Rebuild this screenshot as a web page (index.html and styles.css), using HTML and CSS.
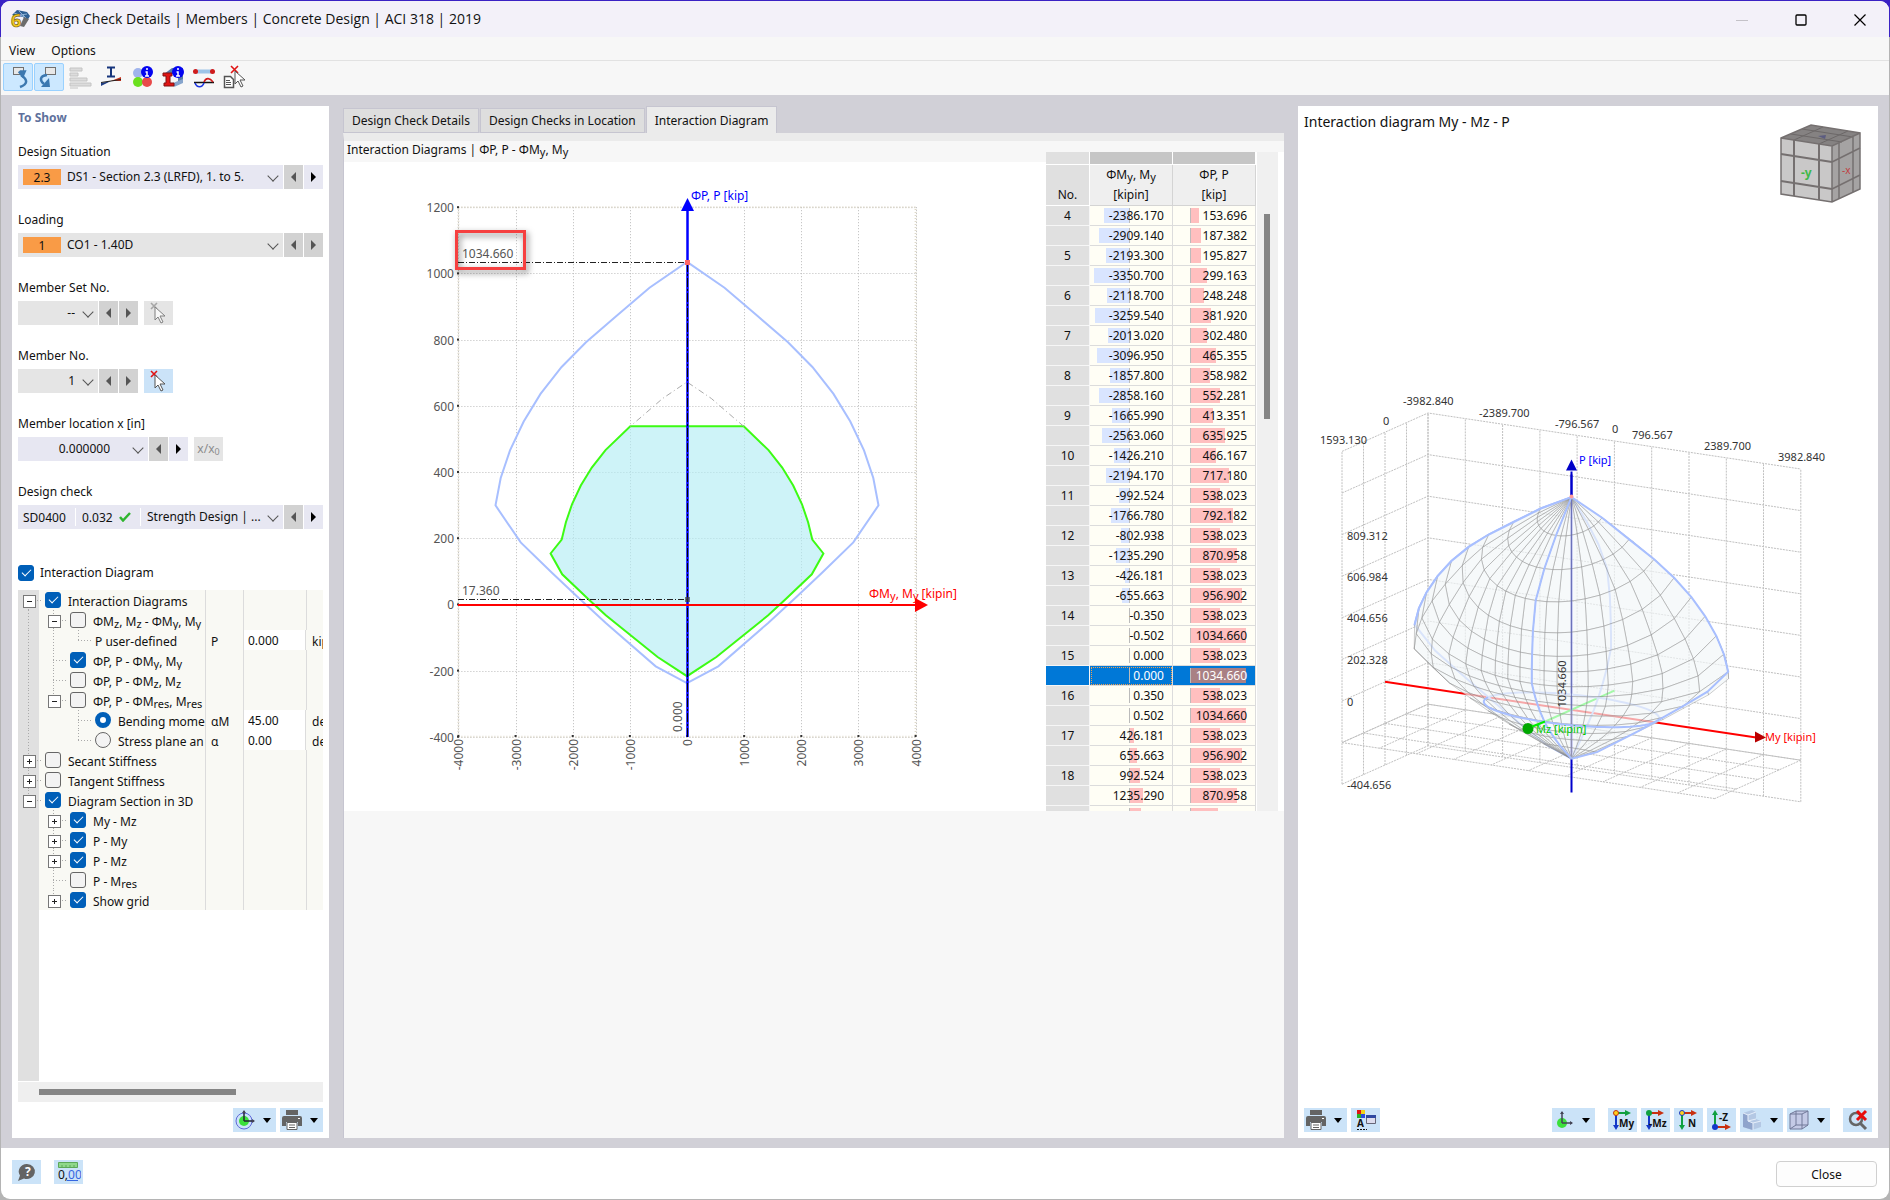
FILE: index.html
```html
<!DOCTYPE html>
<html lang="en">
<head>
    <meta charset="UTF-8">
    <meta name="viewport" content="width=device-width, initial-scale=1.0">
    <title>Design Check Details | Members | Concrete Design | ACI 318 | 2019</title>
    <link rel="stylesheet" href="styles.css">
</head>
<body>

<!-- shared icons -->
<svg class="defs" width="0" height="0" aria-hidden="true">
    <symbol id="i-pick" viewBox="0 0 20 24">
        <path d="M2 2l6 6M8 2l-6 6" stroke="currentColor" stroke-width="1.6"/>
        <path d="M6 6v13l3-3 3 6 2-1-3-6h5z" fill="#fff" stroke="#555" stroke-width="1"/>
    </symbol>
    <symbol id="i-print" viewBox="0 0 22 22">
        <path d="M5 1h12v5H5zM3 7h16q2 0 2 2v8h-4v-4H5v4H1V9q0-2 2-2z" fill="#646464"/>
        <path d="M6 13.500h10v7H6z" fill="#fff" stroke="#646464"/>
        <path d="M8 16h6M8 18.500h6" stroke="#646464"/>
        <path d="M17 9.500h2" stroke="#fff"/>
    </symbol>
    <symbol id="i-down" viewBox="0 0 8 5"><path d="M0 0h8L4 5z" fill="#000"/></symbol>
</svg>

<div class="window">
    <header class="titlebar">
        <svg class="app-icon" viewBox="0 0 20 20">
            <path d="M2 6l5-5 10 2 3 4-3 5-4-4z" fill="#2f5f94"/>
            <path d="M4 4l11 4M9 2l7 7M3 7l14-2" stroke="#8db1d6"/>
            <path d="M14 8l5 2-5 8-4-1z" fill="#6c6c6c"/>
            <text x="1" y="18" class="six">6</text>
        </svg>
        <h1>Design Check Details | Members | Concrete Design | ACI 318 | 2019</h1>
        <div class="win-buttons">
            <button aria-label="Minimize" disabled><svg viewBox="0 0 12 12"><path d="M0 6.500h12" stroke="#c4c2c8"/></svg></button>
            <button aria-label="Maximize"><svg viewBox="0 0 12 12"><rect x="1" y="1" width="10" height="10" rx="1" fill="none" stroke="#000" stroke-width="1.300"/></svg></button>
            <button aria-label="Close window"><svg viewBox="0 0 12 12"><path d="M.5.5l11 11M11.500.5l-11 11" stroke="#000" stroke-width="1.200"/></svg></button>
        </div>
    </header>

    <nav class="menubar">
        <button>View</button>
        <button>Options</button>
    </nav>

    <div class="toolbar">
        <button class="tool active" aria-label="Previous"><svg viewBox="0 0 24 24"><rect x="7.500" y="2.500" width="10" height="7" fill="#e8e8e8" stroke="#707070"/><path d="M14 22c8-3 8-7 1-12" fill="none" stroke="#3c78b0" stroke-width="2.500"/><path d="M14 5v8l8-4-5-4z" transform="rotate(-40 16 9)" fill="#3c78b0"/></svg></button>
        <button class="tool active" aria-label="Next"><svg viewBox="0 0 24 24"><rect x="8.500" y="2.500" width="10" height="7" fill="#e8e8e8" stroke="#707070"/><path d="M10 10c-8 1-7 6-3 9" fill="none" stroke="#3c78b0" stroke-width="2.500"/><path d="M4 22h9l-1-9z" fill="#3c78b0"/></svg></button>
        <button class="tool" aria-label="Result list" disabled><svg viewBox="0 0 24 24"><path d="M2 3h12v3H2zM2 8h8v3H2zM2 13h17v3H2zM2 18h21v3H2zM2 23h8" fill="#dcdcdc" stroke="#c4c4c4"/></svg></button>
        <button class="tool" aria-label="Stresses"><svg viewBox="0 0 24 24"><path d="M8 2.500h8M12 2.500v9M8 11.500h8" stroke="#16357c" stroke-width="2" fill="none"/><path d="M2 21v-3l10-2z" fill="#1f3d84"/><path d="M12 16l10-4v4z" fill="#c7301a"/><path d="M2 17.500l20-3" stroke="#222"/></svg></button>
        <button class="tool" aria-label="Material info"><svg viewBox="0 0 24 24"><circle cx="8" cy="8" r="5" fill="#a0b4ec"/><circle cx="8" cy="17" r="5" fill="#6be01e"/><circle cx="17" cy="17" r="5" fill="#e84a4a"/><circle cx="17" cy="7" r="6" fill="#0404f0"/><path d="M17 3v2M15.500 7H17v4M15 11h4" stroke="#fff" stroke-width="1.500" fill="none"/></svg></button>
        <button class="tool" aria-label="Section info"><svg viewBox="0 0 24 24"><path d="M3 9l8-6h11v13l-5 4V9z" fill="#5879a8"/><path d="M12 18l10-4v4l-9 4z" fill="#86a4cc"/><path d="M2 8h9v3H9v7h4v3H3v-3h2v-7H2z" fill="#e01414" stroke="#801010"/><circle cx="17" cy="7" r="6" fill="#0404f0"/><path d="M17 3v2M15.500 7H17v4M15 11h4" stroke="#fff" stroke-width="1.500" fill="none"/></svg></button>
        <button class="tool" aria-label="Result diagram"><svg viewBox="0 0 24 24"><path d="M3 6.500h18" stroke="#9dc4e8" stroke-width="4"/><circle cx="3.500" cy="6.500" r="2.500" fill="#d01c1c"/><circle cx="20.500" cy="6.500" r="2.500" fill="#d01c1c"/><path d="M2 17.500h20" stroke="#111" stroke-width="1.500"/><path d="M3 18c2 5 7 5 9 0" fill="none" stroke="#1b34e0" stroke-width="1.600"/><path d="M12 17c2-5 6-4 9 0" fill="none" stroke="#d01c1c" stroke-width="1.600"/></svg></button>
        <button class="tool" aria-label="Select"><svg viewBox="0 0 24 24"><path d="M1.500 11.500h6l3 3v8h-9z" fill="#fff" stroke="#555" stroke-width="1.500"/><path d="M3 15.500h4M3 17.500h5M3 19.500h5" stroke="#555"/><path d="M8 1l7 7M15 1l-7 7" stroke="#e01414" stroke-width="1.600"/><path d="M12 6v13l3-3 3 6 2-1-3-6h5z" fill="#fff" stroke="#555"/></svg></button>
    </div>

    <main>
        <section class="panel side">
            <h2>To Show</h2>

            <div class="field">
                <label for="situation">Design Situation</label>
                <div class="line">
                    <div class="combo wide"><span class="chip">2.3</span><select id="situation"><option>DS1 - Section 2.3 (LRFD), 1. to 5.</option></select></div>
                    <button class="step off prev" aria-label="Previous design situation"></button>
                    <button class="step next" aria-label="Next design situation"></button>
                </div>
            </div>

            <div class="field">
                <label for="loading">Loading</label>
                <div class="line">
                    <div class="combo wide gray"><span class="chip">1</span><select id="loading"><option>CO1 - 1.40D</option></select></div>
                    <button class="step off prev" aria-label="Previous loading"></button>
                    <button class="step off next" aria-label="Next loading"></button>
                </div>
            </div>

            <div class="field">
                <label for="memberset">Member Set No.</label>
                <div class="line">
                    <div class="combo small gray"><select id="memberset"><option>--</option></select></div>
                    <button class="step off prev" aria-label="Previous member set"></button>
                    <button class="step off next" aria-label="Next member set"></button>
                    <button class="icon-btn pick disabled" aria-label="Pick member set"><svg width="20" height="24"><use href="#i-pick"/></svg></button>
                </div>
            </div>

            <div class="field">
                <label for="member">Member No.</label>
                <div class="line">
                    <div class="combo small gray"><select id="member"><option>1</option></select></div>
                    <button class="step off prev" aria-label="Previous member"></button>
                    <button class="step off next" aria-label="Next member"></button>
                    <button class="icon-btn pick" aria-label="Pick member"><svg width="20" height="24"><use href="#i-pick"/></svg></button>
                </div>
            </div>

            <div class="field">
                <label for="location">Member location x [in]</label>
                <div class="line">
                    <div class="combo medium"><select id="location"><option>0.000000</option></select></div>
                    <button class="step off prev" aria-label="Previous location"></button>
                    <button class="step next" aria-label="Next location"></button>
                    <button class="icon-btn pick disabled ratio">x/x<sub>0</sub></button>
                </div>
            </div>

            <div class="field">
                <label for="check">Design check</label>
                <div class="line">
                    <div class="combo wide">
                        <span class="code">SD0400</span>
                        <span class="util">0.032 <svg width="12" height="10" viewBox="0 0 12 10"><path d="M1 5l3 3.500L11 1" fill="none" stroke="#2fb52f" stroke-width="2.500"/></svg></span>
                        <select id="check"><option>Strength Design | ...</option></select>
                    </div>
                    <button class="step off prev" aria-label="Previous check"></button>
                    <button class="step next" aria-label="Next check"></button>
                </div>
            </div>

            <label class="main-check"><input type="checkbox" checked> Interaction Diagram</label>

            <div class="tree">
                <div class="row"><div class="name"><button class="g box first-v" aria-label="Collapse"></button><label><input type="checkbox" checked>Interaction Diagrams</label></div><span></span><span></span><span></span></div>
                <div class="row"><div class="name"><i class="g v"></i><button class="g box" aria-label="Collapse"></button><label><input type="checkbox"><span>ΦM<sub>z</sub>, M<sub>z</sub> - ΦM<sub>y</sub>, M<sub>y</sub></span></label></div><span></span><span></span><span></span></div>
                <div class="row"><div class="name"><i class="g v"></i><i class="g v"></i><i class="g l"></i><label for="p-user">P user-defined</label></div><span>P</span><input class="value" id="p-user" value="0.000"><span>kip</span></div>
                <div class="row"><div class="name"><i class="g v"></i><i class="g t"></i><label><input type="checkbox" checked><span>ΦP, P - ΦM<sub>y</sub>, M<sub>y</sub></span></label></div><span></span><span></span><span></span></div>
                <div class="row"><div class="name"><i class="g v"></i><i class="g t"></i><label><input type="checkbox"><span>ΦP, P - ΦM<sub>z</sub>, M<sub>z</sub></span></label></div><span></span><span></span><span></span></div>
                <div class="row"><div class="name"><i class="g v"></i><button class="g box last" aria-label="Collapse"></button><label><input type="checkbox"><span>ΦP, P - ΦM<sub>res</sub>, M<sub>res</sub></span></label></div><span></span><span></span><span></span></div>
                <div class="row"><div class="name"><i class="g v"></i><i class="g"></i><i class="g t"></i><label><input type="radio" name="res" checked>Bending moment</label></div><span>αM</span><input class="value" aria-label="Bending moment angle" value="45.00"><span>deg</span></div>
                <div class="row"><div class="name"><i class="g v"></i><i class="g"></i><i class="g l"></i><label><input type="radio" name="res">Stress plane an</label></div><span>α</span><input class="value" aria-label="Stress plane angle" value="0.00"><span>deg</span></div>
                <div class="row"><div class="name"><button class="g box" aria-label="Expand"></button><label><input type="checkbox">Secant Stiffness</label></div><span></span><span></span><span></span></div>
                <div class="row"><div class="name"><button class="g box" aria-label="Expand"></button><label><input type="checkbox">Tangent Stiffness</label></div><span></span><span></span><span></span></div>
                <div class="row"><div class="name"><button class="g box last" aria-label="Collapse"></button><label><input type="checkbox" checked>Diagram Section in 3D</label></div><span></span><span></span><span></span></div>
                <div class="row"><div class="name"><i class="g"></i><button class="g box" aria-label="Expand"></button><label><input type="checkbox" checked>My - Mz</label></div><span></span><span></span><span></span></div>
                <div class="row"><div class="name"><i class="g"></i><button class="g box" aria-label="Expand"></button><label><input type="checkbox" checked>P - My</label></div><span></span><span></span><span></span></div>
                <div class="row"><div class="name"><i class="g"></i><button class="g box" aria-label="Expand"></button><label><input type="checkbox" checked>P - Mz</label></div><span></span><span></span><span></span></div>
                <div class="row"><div class="name"><i class="g"></i><i class="g t"></i><label><input type="checkbox"><span>P - M<sub>res</sub></span></label></div><span></span><span></span><span></span></div>
                <div class="row"><div class="name"><i class="g"></i><button class="g box last" aria-label="Expand"></button><label><input type="checkbox" checked>Show grid</label></div><span></span><span></span><span></span></div>
            </div>
            <div class="hscroll"><div class="thumb"></div></div>
            <div class="actions">
                <button class="icon-btn drop" aria-label="View settings"><svg width="22" height="22" viewBox="0 0 22 22"><circle cx="10" cy="12" r="8" fill="none" stroke="#6068d8"/><circle cx="10" cy="12" r="5" fill="#3be03b"/><path d="M10 12V2M10 12h10" stroke="#223" stroke-width="1.500"/><path d="M8 4l2-3 2 3zM18 10l3 2-3 2z" fill="#445"/></svg><svg width="8" height="5"><use href="#i-down"/></svg></button>
                <button class="icon-btn drop" aria-label="Print"><svg width="22" height="22"><use href="#i-print"/></svg><svg width="8" height="5"><use href="#i-down"/></svg></button>
            </div>
        </section>

        <section class="center">
            <div class="tabs">
                <button>Design Check Details</button>
                <button>Design Checks in Location</button>
                <button class="current">Interaction Diagram</button>
            </div>
            <div class="content">
                <div class="plot">
                    <h3>Interaction Diagrams | ΦP, P - ΦM<sub>y</sub>, M<sub>y</sub></h3>
                    <svg id="chart" viewBox="0 0 702 649"></svg>
                </div>
                <div class="table-wrap">
                    <table>
                        <thead>
                            <tr class="band"><th></th><th></th><th></th></tr>
                            <tr class="head"><th>No.</th><th>ΦM<sub>y</sub>, M<sub>y</sub><br>[kipin]</th><th>ΦP, P<br>[kip]</th></tr>
                        </thead>
                        <tbody id="rows"></tbody>
                    </table>
                    <div class="vscroll"><div class="thumb"></div></div>
                </div>
            </div>
        </section>

        <section class="panel view">
            <div class="view-head">
                <h3>Interaction diagram My - Mz - P</h3>
                <svg class="cube" width="82" height="80" viewBox="0 0 82 80">
                    <path d="M1 14L31 1l49 8-28 13z" fill="#858282"/>
                    <path d="M1 14l51 8v56L1 70z" fill="#c9c8c8"/>
                    <path d="M52 22L80 9v56L52 78z" fill="#a5a3a3"/>
                    <path d="M14 16v56M39 20v56M1 30l51 8M1 57l51 8" stroke="#757070" stroke-width="2"/>
                    <path d="M59 19v56M73 12v56M52 38l28-14M52 65l28-14" stroke="#757070" stroke-width="1.500"/>
                    <path d="M14 16l29-13M39 20l29-13M11 10l51 8M22 5l51 8" stroke="#6c6868"/>
                    <path d="M1 14L31 1l49 8v56L52 78 1 70zM1 14l51 8L80 9M52 22v56" fill="none" stroke="#757070" stroke-width="1.500"/>
                    <path d="M38 12l8-1-1 4z" fill="#5c5c80"/>
                    <text x="21" y="53" class="cube-y">-y</text>
                    <text x="62" y="50" class="cube-x">-x</text>
                </svg>
            </div>
            <svg id="scene" viewBox="0 3 580 897"></svg>
            <div class="actions">
                <button class="icon-btn drop" aria-label="Print"><svg width="22" height="22"><use href="#i-print"/></svg><svg width="8" height="5"><use href="#i-down"/></svg></button>
                <button class="icon-btn push" aria-label="Display options"><svg width="22" height="22" viewBox="0 0 22 22"><path d="M2 1h4v4H2z" fill="#e01414"/><path d="M6 1h4v4H6z" fill="#f2d21b"/><path d="M2 5h4v4H2z" fill="#24b324"/><path d="M6 5h4v4H6z" fill="#2a4ae0"/><path d="M11.500 6.500h9v8h-9z" fill="#dde" stroke="#667"/><path d="M11 6h10v3H11z" fill="#3048a0"/><text x="2" y="18" class="glyph">A</text><path d="M2 20.500h10" stroke="#111" stroke-dasharray="2 1"/></svg></button>
                <button class="icon-btn drop" aria-label="View settings"><svg width="22" height="22" viewBox="0 0 22 22"><circle cx="9" cy="14" r="5" fill="#3be03b"/><path d="M9 14V3M9 14h10" stroke="#445" stroke-width="1.500"/><path d="M7 5l2-3 2 3zM17 12l3 2-3 2z" fill="#445"/></svg><svg width="8" height="5"><use href="#i-down"/></svg></button>
                <button class="icon-btn gap" aria-label="View in My"><svg width="24" height="24" viewBox="0 0 24 24"><path d="M5 5v14" stroke="#1438c8" stroke-width="2"/><path d="M2 17h6l-3 5z" fill="#1438c8"/><path d="M5 5h10" stroke="#10a040" stroke-width="2"/><path d="M14 2l6 3-6 3z" fill="#10a040"/><circle cx="5" cy="5" r="2.500" fill="#ffd21c" stroke="#c03010"/><text x="8" y="19" class="glyph">My</text></svg></button>
                <button class="icon-btn" aria-label="View in Mz"><svg width="24" height="24" viewBox="0 0 24 24"><path d="M5 5v14" stroke="#1438c8" stroke-width="2"/><path d="M2 17h6l-3 5z" fill="#1438c8"/><path d="M5 5h10" stroke="#c83010" stroke-width="2"/><path d="M14 2l6 3-6 3z" fill="#c83010"/><circle cx="5" cy="5" r="3" fill="#10a040"/><text x="5" y="19" class="glyph">-Mz</text></svg></button>
                <button class="icon-btn" aria-label="View in N"><svg width="24" height="24" viewBox="0 0 24 24"><path d="M5 5v14" stroke="#10a040" stroke-width="2"/><path d="M2 17h6l-3 5z" fill="#10a040"/><path d="M5 5h10" stroke="#c83010" stroke-width="2"/><path d="M14 2l6 3-6 3z" fill="#c83010"/><circle cx="5" cy="5" r="2.500" fill="#ffd21c" stroke="#1438c8"/><text x="11" y="19" class="glyph">N</text></svg></button>
                <button class="icon-btn" aria-label="View in -Z"><svg width="24" height="24" viewBox="0 0 24 24"><path d="M5 5v14" stroke="#10a040" stroke-width="2"/><path d="M2 7h6L5 2z" fill="#10a040"/><path d="M5 19h11" stroke="#c83010" stroke-width="2"/><path d="M15 16l6 3-6 3z" fill="#c83010"/><circle cx="5" cy="19" r="3" fill="#1438c8"/><text x="9" y="13" class="glyph">-Z</text></svg></button>
                <button class="icon-btn drop" aria-label="Display model"><svg width="22" height="22" viewBox="0 0 22 22"><path d="M2 4l9-3 4 2v7l5 2v6l-9 3-9-3z" fill="#b4c8e4"/><path d="M2 4l5 2v6l5 2v7L2 18z" fill="#8fa4cc"/><path d="M2 4l5 2 8-3M7 6v6l8-2M7 12l5 2 8-2M12 14v7" fill="none" stroke="#e6eefa"/></svg><svg width="8" height="5"><use href="#i-down"/></svg></button>
                <button class="icon-btn drop" aria-label="Display box"><svg width="22" height="22" viewBox="0 0 22 22"><path d="M2 5l6-3h12v14l-6 4H2z" fill="#c4cae6" stroke="#707898"/><path d="M2 5h12v15M14 5l6-3M8 2v14h12M8 16l-6 4" fill="none" stroke="#707898"/></svg><svg width="8" height="5"><use href="#i-down"/></svg></button>
                <button class="icon-btn gap" aria-label="Reset zoom"><svg width="22" height="22" viewBox="0 0 22 22"><circle cx="9" cy="10" r="6" fill="none" stroke="#666" stroke-width="2.500"/><path d="M13 14l6 6" stroke="#666" stroke-width="3"/><path d="M10 2l9 9M19 2l-9 9" stroke="#e80c0c" stroke-width="3"/></svg></button>
            </div>
        </section>
    </main>

    <footer>
        <button class="icon-btn" aria-label="Help"><svg width="22" height="22" viewBox="0 0 22 22"><path d="M11 3a8 7.500 0 1 1-3 14.500L2 20l2-5.500A8 7.500 0 0 1 11 3z" fill="#646464"/><text x="9" y="15" class="glyph help">?</text></svg></button>
        <button class="icon-btn" aria-label="Units and decimal places"><svg width="24" height="24" viewBox="0 0 24 24"><path d="M1.500 2.500h19v5h-19z" fill="#8fd88a" stroke="#5ca858"/><path d="M5 7V5M9 7V5M13 7V5M17 7V5" stroke="#5ca858"/><text x="1" y="19" class="units">0,<tspan fill="#3566e0">00</tspan></text><path d="M10 20.500h11" stroke="#3566e0"/></svg></button>
        <button class="close">Close</button>
    </footer>
</div>

<script src="script.js"></script>
</body>
</html>
```
FILE: styles.css
```css
* {
    margin: 0;
    padding: 0;
    box-sizing: border-box;
}

body {
    font-family: "Noto Sans", "Open Sans", sans-serif;
    font-size: 12px;
    line-height: 20px;
    color: #111;
    background: linear-gradient(#3a22c4 37px, #b4b4b4 37px);
    min-height: 100vh;
    display: flex;
    padding: 1px;
}

button,
input,
select {
    font: inherit;
    color: inherit;
    border: none;
    border-radius: 0;
    background: none;
}

svg text {
    font-family: "Noto Sans", "Open Sans", sans-serif;
}

sub {
    font-size: 11px;
    line-height: 1;
    vertical-align: -2px;
}

.defs {
    position: absolute;
}

.window {
    flex: 1;
    display: flex;
    flex-direction: column;
    background: #fff;
    border-radius: 9px;
    overflow: hidden;
}

/* title, menu, toolbar */
.titlebar {
    height: 36px;
    display: flex;
    align-items: center;
    background: #f3f1f9;
    padding-left: 9px;
}

.app-icon {
    width: 20px;
    height: 20px;
    margin-right: 5px;
    overflow: visible;
}

.six {
    font-size: 18px;
    font-weight: bold;
    fill: #f4c81c;
    stroke: #6d5a10;
    stroke-width: 0.6px;
}

.titlebar h1 {
    font-family: "Open Sans", sans-serif;
    font-size: 14px;
    font-weight: normal;
    flex: 1;
}

.win-buttons {
    display: flex;
}

.win-buttons button {
    width: 59px;
    height: 36px;
}

.win-buttons svg {
    width: 12px;
    height: 12px;
    vertical-align: middle;
}

.menubar {
    height: 24px;
    background: #f7f7f7;
    border-bottom: 1px solid #e2e2e2;
    display: flex;
    gap: 16px;
    padding: 4px 8px 0;
}

.menubar button {
    height: 19px;
}

.toolbar {
    height: 34px;
    background: #f7f7f7;
    display: flex;
    gap: 1px;
    padding: 2px;
}

.tool {
    width: 30px;
    height: 28px;
    border: 1px solid transparent;
    border-radius: 2px;
    display: grid;
    place-items: center;
}

.tool svg {
    width: 24px;
    height: 24px;
}

.tool.active {
    background: #cce8ff;
    border-color: #99d1ff;
}

/* main area */
main {
    flex: 1;
    display: grid;
    grid-template-columns: 317px minmax(0, 941fr) minmax(0, 580fr);
    gap: 14px;
    background: #d1d0d7;
    padding: 11px 11px 10px;
}

.panel {
    background: #fff;
    display: flex;
    flex-direction: column;
    padding: 0 6px 6px;
}

.side h2 {
    font-size: 12px;
    line-height: 20px;
    color: #60719c;
    margin: 2px 0 13px;
}

.field {
    margin-bottom: 20px;
}

.field label {
    display: block;
    height: 24px;
    line-height: 22px;
}

.line {
    display: flex;
    gap: 1px;
    height: 24px;
}

.combo {
    background: #e7e7f2;
    display: flex;
    align-items: center;
    position: relative;
    padding-left: 5px;
}

.combo.gray {
    background: #e5e5e5;
}

.combo::after {
    content: "";
    position: absolute;
    right: 6px;
    top: 7px;
    width: 7px;
    height: 7px;
    border: solid #555;
    border-width: 0 1px 1px 0;
    transform: rotate(45deg);
    pointer-events: none;
}

.combo select {
    appearance: none;
    flex: 1;
    min-width: 0;
    height: 24px;
    outline: none;
}

.wide {
    width: 265px;
}

.small {
    width: 80px;
}

.medium {
    width: 130px;
}

.small select {
    text-align: right;
    text-align-last: right;
    padding-right: 23px;
}

.medium select {
    text-align: right;
    text-align-last: right;
    padding-right: 38px;
}

.chip {
    width: 38px;
    height: 16px;
    line-height: 18px;
    text-align: center;
    background: #f99b46;
    margin-right: 6px;
}

.code,
.util {
    height: 18px;
    line-height: 19px;
    border-right: 1px solid #fff;
}

.code {
    width: 53px;
}

.util {
    width: 65px;
    padding-left: 6px;
    margin-right: 6px;
}

.util svg {
    margin-left: 3px;
}

.step {
    width: 19px;
    height: 24px;
    background: #e7e7f2;
    display: grid;
    place-items: center;
}

.step::before {
    content: "";
    border: solid transparent;
    border-width: 5px 0 5px 5px;
    border-left-color: #000;
}

.step.off {
    background: #d2d2d2;
}

.step.off::before {
    border-left-color: #555;
}

.step.prev::before {
    border-width: 5px 5px 5px 0;
    border-right-color: #555;
}

.icon-btn {
    min-width: 29px;
    height: 24px;
    background: #cbe3f8;
    display: flex;
    align-items: center;
    justify-content: center;
}

.pick {
    margin-left: 5px;
    color: #e01414;
}

.icon-btn.disabled {
    background: #e5e5e5;
    color: #8c8c8c;
}

.disabled svg {
    opacity: 0.7;
}

.ratio {
    display: block;
    line-height: 22px;
}

.ratio sub {
    font-size: 9px;
}

.drop {
    min-width: 43px;
    gap: 7px;
    justify-content: flex-start;
    padding-left: 1px;
}

/* check boxes and radios */
input[type="checkbox"],
input[type="radio"] {
    appearance: none;
    flex: none;
    width: 16px;
    height: 16px;
    border: 1px solid #666;
    border-radius: 3px;
    background: #f3f3f3;
    display: grid;
    place-items: center;
}

input[type="checkbox"]:checked {
    background: #005fb8;
    border-color: #005fb8;
}

input[type="checkbox"]:checked::before {
    content: "";
    width: 8px;
    height: 4px;
    border: solid #fff;
    border-width: 0 0 1px 1px;
    transform: rotate(-45deg);
    margin-bottom: 3px;
}

input[type="radio"] {
    border-radius: 50%;
}

input[type="radio"]:checked {
    background: #fff;
    border: 5px solid #005fb8;
}

.main-check {
    display: flex;
    align-items: center;
    gap: 6px;
    height: 20px;
    line-height: 22px;
    margin: 14px 0 7px;
}

/* option tree */
.tree {
    flex: 1;
    background: linear-gradient(90deg, #e0e0e0 21px, #fff 21px);
}

.row {
    display: grid;
    grid-template-columns: 188px 38px 63px 1fr;
    height: 20px;
    overflow: hidden;
    background: linear-gradient(90deg, #e0e0e0 21px, #f9f9f4 21px);
}

.row > * {
    border-right: 1px solid #dcdcdc;
    overflow: hidden;
    white-space: nowrap;
    line-height: 24px;
}

.row > :last-child {
    border-right: none;
}

.row > span {
    padding-left: 5px;
}

.value {
    width: 62px;
    height: 20px;
    background: #fff;
    padding: 2px 0 0 4px;
}

.name {
    display: flex;
    padding-left: 2px;
}

.name label {
    display: flex;
    height: 20px;
}

.name label input {
    margin: 2px 7px 0 0;
}

.g {
    flex: none;
    width: 25px;
    height: 20px;
    --v: repeating-linear-gradient(#aaa 0 1px, transparent 1px 3px) 8px 0 / 1px 100% no-repeat;
    --h: repeating-linear-gradient(90deg, #aaa 0 1px, transparent 1px 3px) 8px 10px / 13px 1px no-repeat;
}

.g.v {
    background: var(--v);
}

.g.t,
.g.box {
    background: var(--v), var(--h);
}

.g.l,
.g.box.last {
    background: repeating-linear-gradient(#aaa 0 1px, transparent 1px 3px) 8px 0 / 1px 10px no-repeat, var(--h);
}

.g.first-v {
    background: repeating-linear-gradient(#aaa 0 1px, transparent 1px 3px) 8px 10px / 1px 10px no-repeat, var(--h);
}

.g.box {
    position: relative;
}

.g.box::before {
    content: "";
    position: absolute;
    left: 3px;
    top: 5px;
    width: 11px;
    height: 11px;
    border: 1px solid #777;
    background: linear-gradient(#222, #222) center / 5px 1px no-repeat #fff;
}

.g.box[aria-label="Expand"]::before {
    background: linear-gradient(#222, #222) center / 5px 1px no-repeat, linear-gradient(#222, #222) center / 1px 5px no-repeat #fff;
}

.hscroll {
    height: 20px;
    background: #efefef;
    margin: 1px 0 6px;
    padding: 7px 21px;
}

.hscroll .thumb {
    width: 75%;
    height: 6px;
    background: #858585;
}

.actions {
    display: flex;
    justify-content: flex-end;
    gap: 4px;
}

/* centre */
.center {
    display: flex;
    flex-direction: column;
}

.tabs {
    display: flex;
    align-items: flex-end;
    height: 27px;
    gap: 1px;
}

.tabs button {
    height: 25px;
    padding: 1px 8px 0;
    background: #dedede;
    border: 1px solid #c6c5d0;
}

.tabs .current {
    height: 27px;
    background: #ebebeb;
    border-bottom: none;
}

.content {
    flex: 1;
    display: flex;
    align-items: flex-start;
    background: #f7f7f7;
    border-top: 8px solid #ebebeb;
    border-left: 1px solid #c6c5d0;
}

.plot {
    flex: 1;
    min-width: 0;
    background: #fff;
}

.plot h3 {
    height: 21px;
    line-height: 18px;
    font-size: 12px;
    font-weight: normal;
    background: #f7f7f7;
    padding-left: 3px;
}

.plot svg {
    display: block;
    width: 100%;
}

.table-wrap {
    width: 238px;
    height: 659px;
    margin-top: 11px;
    overflow: hidden;
    display: flex;
    align-items: flex-start;
    background: #fff;
}

table {
    width: 210px;
    table-layout: fixed;
    border-collapse: separate;
    border-spacing: 0;
}

th {
    font-weight: normal;
    background: #efefef;
    border-right: 1px solid #d4d4d4;
    border-bottom: 1px solid #d4d4d4;
    vertical-align: bottom;
}

th:first-child {
    width: 44px;
    background: #e0e0e0;
    border-color: #fff;
}

.band th {
    height: 13px;
    background: #c6c6c6;
    border-color: #fff;
}

.band th:first-child {
    background: #e0e0e0;
}

.head th {
    height: 40px;
}

td {
    height: 20px;
    line-height: 19px;
    text-align: right;
    padding-right: 8px;
    background: #fffef5;
    border-right: 1px solid #dcdcdc;
    border-bottom: 1px solid #dcdcdc;
    position: relative;
}

td:first-child {
    text-align: center;
    padding-right: 0;
    background: #e0e0e0;
    border-color: #f6f6f6;
}

td b {
    font-weight: normal;
    position: relative;
}

/* result bars behind the numbers */
.bar {
    position: absolute;
    top: 2px;
    height: 15px;
}

.bar.pos {
    left: 39px;
    background: #ffbfbf;
    border-left: 1px solid #bbb;
}

.bar.neg {
    right: 42px;
    background: #d9e5ff;
    border-right: 1px solid #bbb;
}

.bar.p {
    left: 17px;
}

.selected td {
    background: #0078d7;
    color: #fff;
}

.selected td:nth-child(2) {
    outline: 1px dotted #f0a050;
    outline-offset: -2px;
}

.selected .p {
    background: #a98084;
}

.vscroll {
    width: 21px;
    height: 659px;
    margin-left: 1px;
    background: #f0f0f0;
    padding: 62px 7px;
}

.vscroll .thumb {
    width: 6px;
    height: 205px;
    background: #858585;
}

/* diagram */
#chart text {
    font-size: 12px;
    fill: #555;
}

#chart .blue {
    fill: #00f;
}

#chart .red {
    fill: #f00;
}

.grid line {
    stroke: #bbb;
    stroke-dasharray: 1 2;
}

.frame {
    fill: none;
    stroke: #ddd8c8;
    stroke-width: 2;
    stroke-dasharray: 1 2;
}

.mark {
    filter: drop-shadow(2px 3px 3px rgba(0, 0, 0, 0.5));
}

/* 3D view */
.view-head {
    display: flex;
    justify-content: space-between;
    height: 100px;
}

.view-head h3 {
    font-size: 14px;
    font-weight: normal;
    line-height: 32px;
}

.cube {
    margin: 18px 10px 0 0;
}

.cube-y {
    font-size: 12px;
    font-weight: bold;
    fill: #3fb84a;
}

.cube-x {
    font-size: 10px;
    fill: #c04040;
}

#scene {
    flex: 1;
    min-height: 0;
    margin: 0 -6px;
}

#scene text {
    font-size: 11px;
    fill: #333;
}

#scene .blue {
    fill: #00f;
}

#scene .red {
    fill: #f00;
}

#scene .green {
    fill: #0c0;
}

.walls path {
    stroke: #c0c0c0;
    stroke-dasharray: 2 1;
}

.view .push {
    margin-right: auto;
}

.view .gap {
    margin-left: 9px;
}

.glyph {
    font-size: 10px;
    font-weight: bold;
    fill: #111;
}

.glyph.help {
    font-size: 12px;
    fill: #fff;
}

.units {
    font-size: 12px;
    fill: #111;
}

/* footer */
footer {
    height: 51px;
    display: flex;
    align-items: flex-start;
    gap: 13px;
    padding: 12px 12px 0 11px;
}

.close {
    margin: 1px 0 0 auto;
    width: 101px;
    height: 26px;
    border: 1px solid #d0d0d0;
    border-radius: 4px;
    background: #fdfdfd;
    padding-top: 2px;
}
```
FILE: script.js
```js
// [My, P] pairs, two per point number (design, nominal)
const results = [
    [-2386.17, 153.696], [-2909.14, 187.382],
    [-2193.3, 195.827], [-3350.7, 299.163],
    [-2118.7, 248.248], [-3259.54, 381.92],
    [-2013.02, 302.48], [-3096.95, 465.355],
    [-1857.8, 358.982], [-2858.16, 552.281],
    [-1665.99, 413.351], [-2563.06, 635.925],
    [-1426.21, 466.167], [-2194.17, 717.18],
    [-992.524, 538.023], [-1766.78, 792.182],
    [-802.938, 538.023], [-1235.29, 870.958],
    [-426.181, 538.023], [-655.663, 956.902],
    [-0.35, 538.023], [-0.502, 1034.66],
    [0, 538.023], [0, 1034.66],
    [0.35, 538.023], [0.502, 1034.66],
    [426.181, 538.023], [655.663, 956.902],
    [992.524, 538.023], [1235.29, 870.958],
    [1095, 507]
];

document.getElementById("rows").innerHTML = results.map(([m, p], i) => {
    const no = i % 2 === 0 && i < 30 ? 4 + i / 2 : "";
    const side = m < 0 ? "neg" : "pos";
    return `<tr class="${i === 23 ? "selected" : ""}"><td>${no}</td>
        <td><span class="bar ${side}" style="width:${Math.round(Math.abs(m) * 0.0104) + 1}px"></span><b>${i < 30 ? m.toFixed(3) : ""}</b></td>
        <td><span class="bar pos p" style="width:${Math.round(p * 0.0532) + 1}px"></span><b>${i < 30 ? p.toFixed(3) : ""}</b></td></tr>`;
}).join("");

// nominal curve, from the top down
const outer = [[0, 1034.66], [655.663, 956.902], [1235.29, 870.958], [1766.78, 792.182], [2194.17, 717.18],
    [2563.06, 635.925], [2858.16, 552.281], [3096.95, 465.355], [3259.54, 381.92], [3350.7, 299.163],
    [2909.14, 187.382], [2358, 95], [1923, 24], [1421, -56], [547, -187], [0, -238]];
const inner = [[992.524, 538.023], [1426.21, 466.167], [1665.99, 413.351], [1857.8, 358.982], [2013.02, 302.48],
    [2118.7, 248.248], [2193.3, 195.827], [2386.17, 153.696], [2183, 91], [1715, 14], [1420, -33], [515, -159], [0, -217]];
const cut = [[992.524, 538.023], [803, 566], [426.181, 622], [0, 672]];

// both halves of a symmetric curve
const mirror = pts => pts.concat(pts.slice().reverse().map(([m, p]) => [-m, p]));

// ---------- 2D diagram ----------
const cx = m => 343 + m * 0.05715;
const cy = p => 442.4 - p * 0.331;
const line2d = pts => pts.map(([m, p]) => cx(m).toFixed(1) + "," + cy(p).toFixed(1)).join(" ");

let chart = '<g class="grid">';
for (let p = -400; p <= 1200; p += 200) {
    chart += `<line x1="${cx(-4000)}" y1="${Math.round(cy(p)) + 0.5}" x2="${cx(4000)}" y2="${Math.round(cy(p)) + 0.5}"/>`;
}
for (let m = -4000; m <= 4000; m += 1000) {
    chart += `<line x1="${Math.round(cx(m)) + 0.5}" y1="${cy(1200)}" x2="${Math.round(cx(m)) + 0.5}" y2="${cy(-400)}"/>`;
}
chart += `</g><rect class="frame" x="${cx(-4000)}" y="${cy(1200)}" width="${cx(4000) - cx(-4000)}" height="${cy(-400) - cy(1200)}"/>`;
chart += `<polygon points="${line2d(mirror(inner))}" fill="#b4ecf4" fill-opacity=".65" stroke="#3dfb14" stroke-width="2"/>`;
chart += `<polyline points="${line2d(mirror(cut.slice().reverse()))}" fill="none" stroke="none"/>`;
chart += `<polyline points="${line2d(mirror(cut))}" fill="none" stroke="#aaa" stroke-dasharray="6 3 1 3"/>`;
chart += `<polygon points="${line2d(mirror(outer))}" fill="none" stroke="#a8bfff" stroke-width="2"/>`;
for (let p = -400; p <= 1200; p += 200) {
    chart += `<text x="110" y="${cy(p) + 5}" text-anchor="end">${p}</text><rect x="113" y="${cy(p) - 1}" width="2" height="2" fill="#333"/>`;
}
for (let m = -4000; m <= 4000; m += 1000) {
    chart += `<text transform="translate(${cx(m) + 5} 577) rotate(-90)" text-anchor="end">${m}</text><rect x="${cx(m) - 1}" y="573" width="2" height="2" fill="#333"/>`;
}
chart += `
    <path d="M343.500 575V48" stroke="#00f" stroke-width="2.500"/><path d="M343.500 575V100" stroke="#000" stroke-dasharray="9 2 2 2"/>
    <path d="M337 49h13l-6.500-13z" fill="#00f"/>
    <path d="M114 443h460" stroke="#f00" stroke-width="2"/><path d="M571 436v14l13-7z" fill="#f00"/>
    <path d="M114 100.500h229M114 437.500h229" stroke="#222" stroke-dasharray="6 2 1 2"/>
    <rect x="341" y="98" width="5" height="5" fill="#f66"/><rect x="341" y="435" width="5" height="5" fill="#444" fill-opacity=".7"/>
    <rect class="mark" x="112.500" y="69.500" width="68" height="37" fill="none" stroke="#f64040" stroke-width="3"/>
    <text x="118" y="96">1034.660</text><text x="118" y="433">17.360</text>
    <text transform="translate(338 570) rotate(-90)">0.000</text>
    <text class="blue" x="347" y="38">ΦP, P [kip]</text>
    <text class="red" x="525" y="436">ΦM<tspan dy="2" font-size="11">y</tspan><tspan dy="-2">, M</tspan><tspan dy="2" font-size="11">y</tspan><tspan dy="-2"> [kipin]</tspan></text>`;
document.getElementById("chart").innerHTML = chart;

// ---------- 3D diagram ----------
const M = 3982.835, Z = 1593.13, S = 796.567, H = 202.328;
const proj = (m, z, p) => [273.4 + 0.0468 * m - 0.027 * z, 504.3 + 0.00703 * m + 0.01205 * z - 0.2056 * p];
const path3d = pts => "M" + pts.map(q => proj(...q).map(v => v.toFixed(1)).join(" ")).join("L");

// Mz curve with the same number of points as the My curve
const front = [[0, 1034.66], [570, 881], [1004, 745], [1322, 609], [1426, 466], [1455, 355], [1467, 283], [1467, 214],
    [1385, 164], [1296, 118], [1163, 61], [1004, 3], [830, -50], [633, -99], [407, -153], [0, -238]];

function node(k, deg) {
    const a = outer[k][0], b = front[k][0];
    if (!a) return [0, 0, outer[k][1]];
    const c = Math.cos(deg * Math.PI / 180), s = Math.sin(deg * Math.PI / 180);
    const r = 1 / Math.sqrt(c * c / (a * a) + s * s / (b * b));
    return [r * c, r * s, outer[k][1] + (front[k][1] - outer[k][1]) * Math.abs(r * s) / b];
}

const meridian = deg => outer.map((_, k) => node(k, deg));
const ring0 = (from, to) => {
    const pts = [];
    for (let d = from; d <= to; d += 5) {
        const c = Math.cos(d * Math.PI / 180), s = Math.sin(d * Math.PI / 180);
        pts.push([1780 * c, 1004 * s, 0]);
    }
    return pts;
};

let scene = '<g class="walls" fill="none">';
for (let p = -2 * H; p < 6.5 * H; p += H) {
    scene += `<path d="${path3d([[-M, Z, p], [-M, -Z, p], [M, -Z, p]])}"/>`;
}
for (let m = -M; m < M + 1; m += S) {
    scene += `<path d="${path3d([[m, -Z, -2 * H], [m, -Z, 6 * H]])}"/><path d="${path3d([[m, -Z, -H], [m, Z, -H]])}"/>`;
}
for (let z = -Z; z < Z + 1; z += S) {
    scene += `<path d="${path3d([[-M, z, -2 * H], [-M, z, 6 * H]])}"/><path d="${path3d([[-M, z, -H], [M, z, -H]])}"/>`;
}
scene += "</g>";

// axes and rear curves are covered by the translucent faces
scene += `<path d="${path3d([[-M, 0, 0], [M, 0, 0]])}" stroke="#f00" stroke-width="2"/>
    <path d="${path3d([[0, -Z, 0], [0, Z, 0]])}" stroke="#0f0" stroke-width="2"/>
    <path d="M273.500 587V269" stroke="#00c" stroke-width="2"/>
    <path d="${path3d(meridian(270))}" fill="none" stroke="#a8bfff" stroke-width="2"/>
    <path d="${path3d(ring0(180, 360))}" fill="none" stroke="#a8bfff" stroke-width="2"/>
    <path d="${path3d(meridian(180))}" fill="none" stroke="#a8bfff" stroke-width="2"/>`;

for (let d = 0; d < 360; d += 10) {
    for (let k = 0; k < outer.length - 1; k++) {
        const quad = [node(k, d), node(k, d + 10), node(k + 1, d + 10), node(k + 1, d)];
        const q = quad.map(n => proj(...n));
        let area = 0;
        q.forEach((pt, i) => {
            const nx = q[(i + 1) % 4];
            area += pt[0] * nx[1] - nx[0] * pt[1];
        });
        if (area < 0) {
            scene += `<path d="${path3d(quad)}Z" fill="#f2f6f8" fill-opacity=".68" stroke="#888" stroke-opacity=".5" stroke-width=".8"/>`;
        }
    }
}

scene += `<g fill="none" stroke="#a8bfff" stroke-width="2">
    <path d="${path3d(meridian(0))}"/><path d="${path3d(meridian(90))}"/>
    <path d="${path3d(meridian(180).slice(0, 10))}"/><path d="${path3d(ring0(0, 180))}"/></g>
    <path d="M273.500 294V504" stroke="#4050c0" stroke-opacity=".45"/>
    <path d="M273.500 292V266" stroke="#00c" stroke-width="2"/><path d="M268 265h11l-5.500-11z" fill="#0000c8"/>
    <circle cx="230" cy="523" r="5.500" fill="#00a800"/><path d="M234 521l13-5" stroke="#0e0" stroke-width="2"/>
    <circle cx="273.500" cy="291" r="2" fill="#ff9c9c"/>
    <path d="M457 526v11l11-5z" fill="#b80000"/>`;

const labels = [["-3982.840", 105, 199], ["-2389.700", 181, 211], ["-796.567", 257, 222], ["0", 314, 227],
    ["796.567", 334, 233], ["2389.700", 406, 244], ["3982.840", 480, 255], ["0", 85, 219], ["1593.130", 22, 238],
    ["809.312", 49, 334], ["606.984", 49, 375], ["404.656", 49, 416], ["202.328", 49, 458], ["0", 49, 500], ["-404.656", 49, 583]];
labels.forEach(([t, x, y]) => scene += `<text x="${x}" y="${y}">${t}</text>`);
scene += `<text transform="translate(268 502) rotate(-90)">1034.660</text>
    <text class="blue" x="281" y="258">P [kip]</text>
    <text class="red" x="467" y="535">My [kipin]</text>
    <text class="green" x="238" y="527">Mz [kipin]</text>`;
document.getElementById("scene").innerHTML = scene;
```
